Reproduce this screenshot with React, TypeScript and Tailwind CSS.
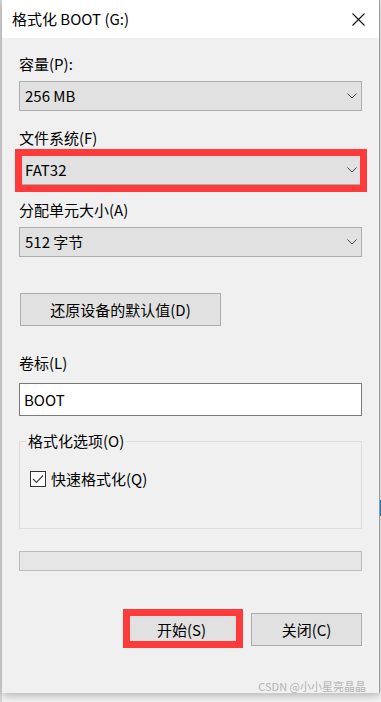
import React from "react";

const font = "font-['Noto_Sans_CJK_SC','Noto_Sans',sans-serif]";

function Chevron() {
  return (
    <svg width="10" height="6" viewBox="0 0 10 6" className="shrink-0">
      <path d="M0.5 0.5 L5 5 L9.5 0.5" fill="none" stroke="#444" strokeWidth="1" />
    </svg>
  );
}

function Select({ value }: { value: string }) {
  return (
    <div className="flex h-[30px] items-center justify-between border border-[#adadad] bg-[#e1e1e1] pl-[5px] pr-[4px] text-[15px] leading-[20px] text-black">
      <span>{value}</span>
      <Chevron />
    </div>
  );
}

function Label({ text, className = "" }: { text: string; className?: string }) {
  return <div className={`h-[20px] text-[15px] leading-[20px] text-black ${className}`}>{text}</div>;
}

export default function App() {
  return (
    <div className={`relative h-[702px] w-[381px] overflow-hidden bg-[#f4f4f4] ${font}`}>
      {/* faint window behind */}
      <div className="absolute left-0 top-0 h-full w-[2px] bg-[#d6d6d6]" />
      <div className="absolute right-0 top-[500px] h-[16px] w-[2px] bg-[#1c8ad6]" />

      <div className="relative ml-[2px] flex h-[693px] w-[378px] flex-col border-r border-[#9a9a9a] bg-[#f0f0f0] shadow-[0_3px_8px_rgba(0,0,0,0.25)]">
        {/* title bar */}
        <div className="flex h-[38px] shrink-0 items-center justify-between bg-white pl-[10px] pr-[14px]">
          <span className="text-[15px] leading-[20px] text-black">格式化 BOOT (G:)</span>
          <svg width="13" height="13" viewBox="0 0 13 13">
            <path d="M0.5 0.5 L12.5 12.5 M12.5 0.5 L0.5 12.5" stroke="#111" strokeWidth="1.1" />
          </svg>
        </div>

        <div className="flex flex-col px-[17px]">
          <Label text="容量(P):" className="mt-[16px]" />
          <div className="mt-[7px]">
            <Select value="256 MB" />
          </div>

          <Label text="文件系统(F)" className="mt-[17px]" />
          <div className="relative mt-[7px]">
            <Select value="FAT32" />
            <div className="pointer-events-none absolute -bottom-[7px] -left-[4px] -right-[5px] -top-[6px] border-[7px] border-[#ff3a3a]" />
          </div>

          <Label text="分配单元大小(A)" className="mt-[15px]" />
          <div className="mt-[7px]">
            <Select value="512 字节" />
          </div>

          <button className="ml-[1px] mt-[36px] flex h-[33px] w-[201px] items-center justify-center border border-[#adadad] bg-[#e1e1e1] text-[15px] leading-[20px] text-black">
            还原设备的默认值(D)
          </button>

          <Label text="卷标(L)" className="mt-[27px]" />
          <div className="mt-[10px] flex h-[33px] items-center border border-[#7a7a7a] bg-white pl-[4px] text-[15px] leading-[20px] text-black">
            BOOT
          </div>

          {/* group box */}
          <div className="relative mt-[25px] h-[88px] border border-[#dcdcdc]">
            <div className="absolute -top-[11px] left-[6px] bg-[#f0f0f0] px-[2px] text-[15px] leading-[20px] text-black">
              格式化选项(O)
            </div>
            <div className="ml-[10px] mt-[27px] flex items-center gap-[5px]">
              <div className="flex h-[16px] w-[16px] items-center justify-center border border-[#333] bg-white">
                <svg width="12" height="10" viewBox="0 0 12 10">
                  <path d="M1 5 L4.5 8.5 L11 1.5" fill="none" stroke="#444" strokeWidth="1.2" />
                </svg>
              </div>
              <span className="text-[15px] leading-[20px] text-black">快速格式化(Q)</span>
            </div>
          </div>

          {/* progress */}
          <div className="mt-[22px] h-[20px] border border-[#bcbcbc] bg-[#e6e6e6]" />

          {/* buttons */}
          <div className="mt-[42px] flex justify-end gap-[14px]">
            <div className="relative">
              <button className="flex h-[33px] w-[111px] items-center justify-center border border-[#0078d7] bg-[#e1e1e1] text-[15px] leading-[20px] text-black">
                开始(S)
              </button>
              <div className="pointer-events-none absolute -bottom-[2px] -left-[3px] -right-[6px] -top-[4px] border-[7px] border-[#ff3a3a]" />
            </div>
            <button className="flex h-[33px] w-[111px] items-center justify-center border border-[#adadad] bg-[#e1e1e1] text-[15px] leading-[20px] text-black">
              关闭(C)
            </button>
          </div>

          <div className="-mr-[4px] mt-[34px] self-end text-[11px] leading-[13px] text-[#b4b4b4]">
            CSDN @小小星亮晶晶
          </div>
        </div>
      </div>
    </div>
  );
}
